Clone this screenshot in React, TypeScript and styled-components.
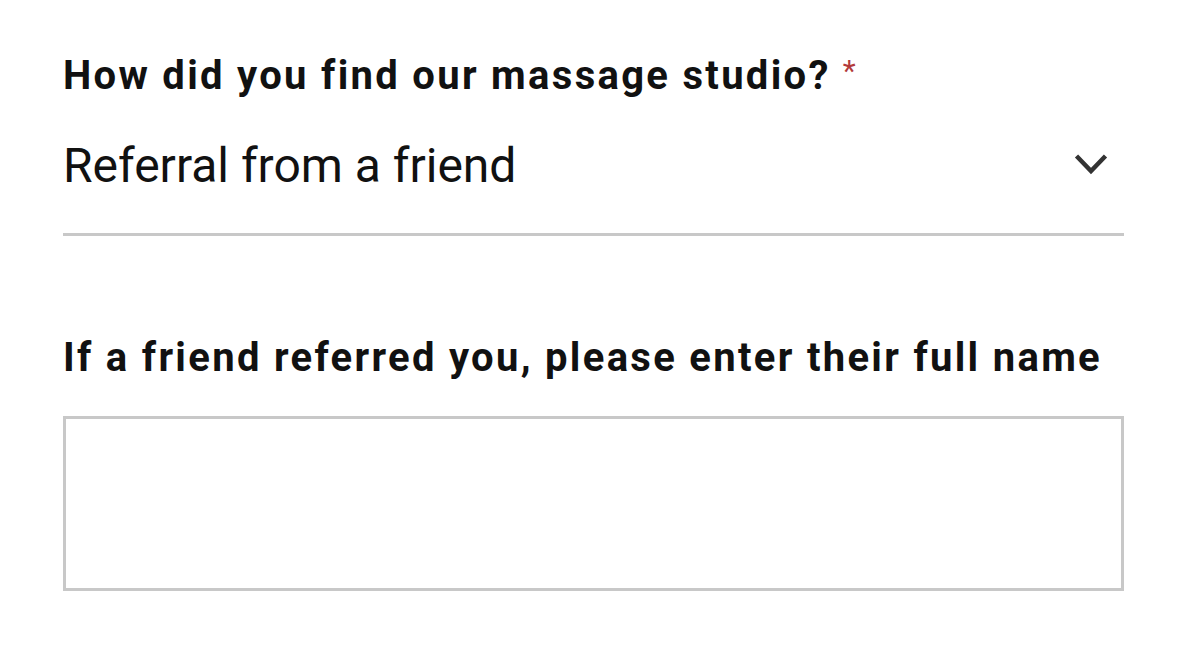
import styled, { createGlobalStyle } from 'styled-components';

const GlobalStyle = createGlobalStyle`
  html, body {
    margin: 0;
    padding: 0;
    background: #ffffff;
  }
  body {
    font-family: Roboto, 'Liberation Sans', sans-serif;
    color: #000;
  }
`;

const Form = styled.div`
  width: 1061px;
  padding: 47px 0 0 63px;
  display: flex;
  flex-direction: column;
`;

const Field = styled.div<{ $gap?: number }>`
  display: flex;
  flex-direction: column;
  margin-bottom: ${(p) => p.$gap ?? 0}px;
`;

const Label = styled.label`
  font-size: 40px;
  font-weight: 700;
  letter-spacing: 2.3px;
  line-height: 48px;
  color: #111;
  white-space: nowrap;
`;

const Required = styled.span`
  color: #b23a3a;
  margin-left: 12px;
  font-size: 30px;
  font-weight: 400;
  vertical-align: 8px;
`;

const SelectRow = styled.div`
  display: flex;
  align-items: center;
  justify-content: space-between;
  padding: 38px 16px 39px 0;
  border-bottom: 3px solid #c8c8c8;
`;

const SelectValue = styled.span`
  font-size: 48px;
  line-height: 56px;
  font-weight: 400;
  color: #111;
`;

const Chevron = styled.svg`
  width: 34px;
  height: 24px;
  margin-top: -4px;
`;

const TextBox = styled.div`
  box-sizing: border-box;
  margin-top: 34px;
  height: 175px;
  border: 3px solid #c8c8c8;
`;

export default function App() {
  return (
    <>
      <GlobalStyle />
      <Form>
        <Field $gap={98}>
          <Label>
            How did you find our massage studio?<Required>*</Required>
          </Label>
          <SelectRow>
            <SelectValue>Referral from a friend</SelectValue>
            <Chevron viewBox="0 0 34 24">
              <path d="M2.5 4 L17 19 L31.5 4" fill="none" stroke="#333" strokeWidth="4.5" />
            </Chevron>
          </SelectRow>
        </Field>
        <Field>
          <Label>If a friend referred you, please enter their full name</Label>
          <TextBox />
        </Field>
      </Form>
    </>
  );
}
